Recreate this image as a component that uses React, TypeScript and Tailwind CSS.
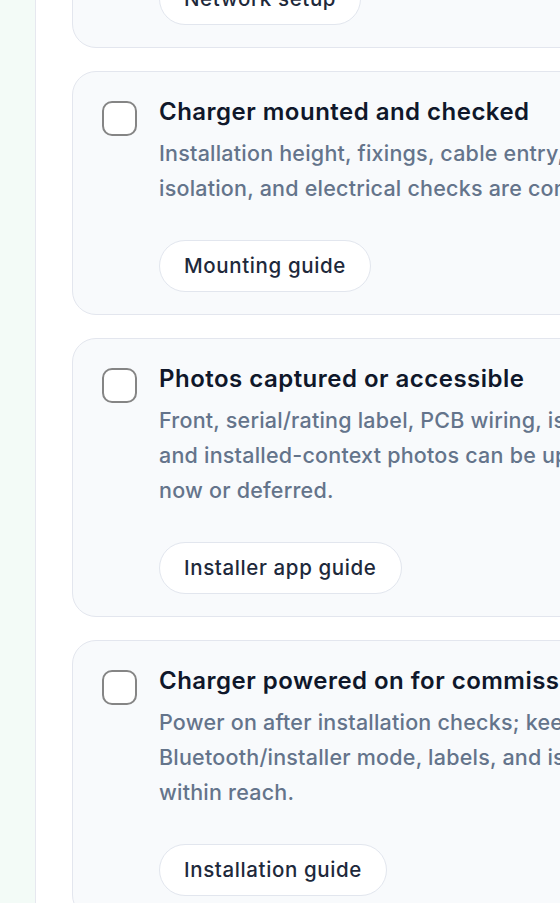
import React from "react";

type Step = {
  title: string;
  lines: string[];
  guide: string;
};

const steps: Step[] = [
  {
    title: "Network connection confirmed",
    lines: [
      "Wi-Fi, Ethernet, or 4G signal is confirmed at the",
      "charger location before commissioning starts.",
    ],
    guide: "Network setup",
  },
  {
    title: "Charger mounted and checked",
    lines: [
      "Installation height, fixings, cable entry, RCD,",
      "isolation, and electrical checks are complete.",
    ],
    guide: "Mounting guide",
  },
  {
    title: "Photos captured or accessible",
    lines: [
      "Front, serial/rating label, PCB wiring, isolator,",
      "and installed-context photos can be uploaded",
      "now or deferred.",
    ],
    guide: "Installer app guide",
  },
  {
    title: "Charger powered on for commissioning",
    lines: [
      "Power on after installation checks; keep the",
      "Bluetooth/installer mode, labels, and isolator",
      "within reach.",
    ],
    guide: "Installation guide",
  },
];

const StepCard: React.FC<{ step: Step }> = ({ step }) => {
  return (
    <div className="w-[700px] shrink-0 rounded-[24px] border border-[#e3e6ee] bg-[#f8fafc] pl-[29px] pt-[26px] pb-[22px] flex gap-[22px]">
      <div className="mt-[3px] w-[35px] h-[35px] shrink-0 rounded-[10px] border-[2.5px] border-[#858585] bg-white" />
      <div className="flex flex-col items-start min-w-0">
        <h3 className="text-[24px] leading-[28px] font-semibold tracking-[0.02em] text-[#0f172a] whitespace-nowrap">
          {step.title}
        </h3>
        <p className="mt-[10px] text-[21.5px] leading-[35px] font-medium tracking-[0.01em] text-[#64748b] whitespace-nowrap">
          {step.lines.map((line, i) => (
            <React.Fragment key={i}>
              {line}
              {i < step.lines.length - 1 && <br />}
            </React.Fragment>
          ))}
        </p>
        <button className="mt-[34px] h-[52px] px-[24px] rounded-full border border-[#e2e6ee] bg-white text-[20.5px] font-medium tracking-[0.03em] text-[#1e293b]">
          {step.guide}
        </button>
      </div>
    </div>
  );
};

export default function App() {
  return (
    <div
      className="h-[903px] w-full overflow-hidden flex bg-white"
      style={{ fontFamily: "Inter, 'Noto Sans', sans-serif" }}
    >
      <div className="w-[36px] shrink-0 bg-[#f3fbf7] border-r border-[#e6e8ef]" />
      <div className="flex-1 min-w-0 overflow-hidden pl-[36px]">
        <div className="-mt-[196px] flex flex-col gap-[23px]">
          {steps.map((step, i) => (
            <StepCard key={i} step={step} />
          ))}
        </div>
      </div>
    </div>
  );
}
